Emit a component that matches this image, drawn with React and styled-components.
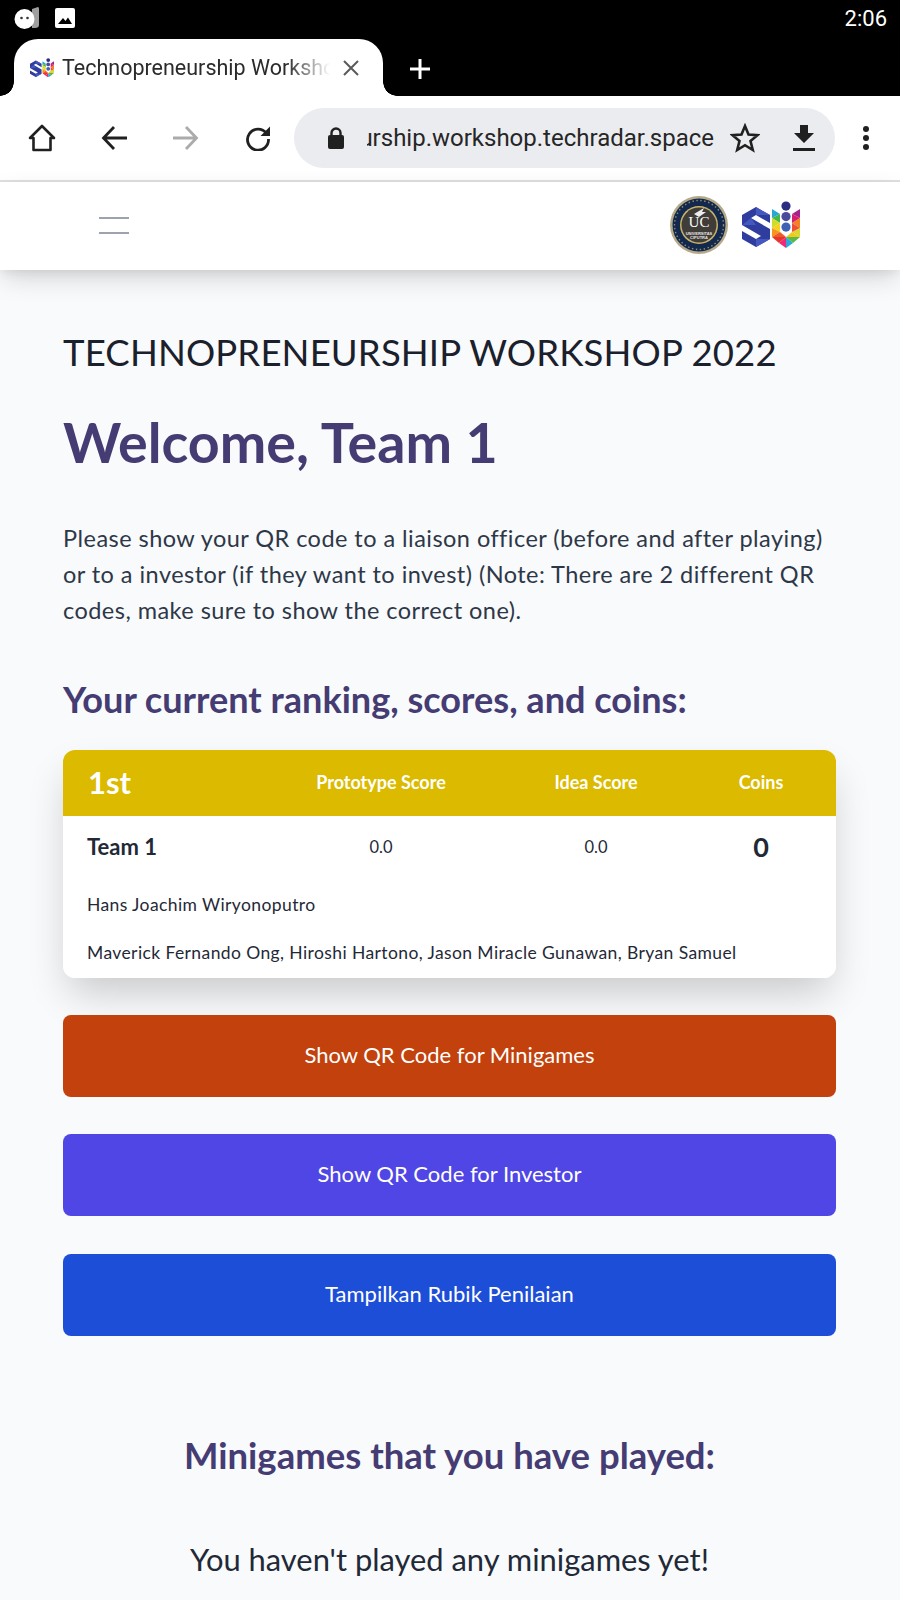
import styled, { createGlobalStyle } from "styled-components";

const GlobalStyle = createGlobalStyle`
  html, body {
    margin: 0;
    padding: 0;
    background: #f9fafb;
  }
  body {
    font-family: "Lato", "Noto Sans", sans-serif;
    height: 1600px;
    overflow: hidden;
  }
  * {
    box-sizing: border-box;
  }
`;

const StatusBar = styled.div`
  height: 39px;
  background: #000;
  display: flex;
  align-items: center;
  justify-content: space-between;
  padding: 0 13px 3px 14px;
`;

const StatusIcons = styled.div`
  display: flex;
  align-items: center;
  gap: 15px;
`;

const Clock = styled.span`
  font-family: "Roboto", sans-serif;
  font-size: 22px;
  color: #fff;
`;

const TabStrip = styled.div`
  height: 57px;
  background: #000;
  display: flex;
  align-items: flex-end;
  padding-left: 14px;
`;

const Tab = styled.div`
  position: relative;
  width: 369px;
  height: 57px;
  background: #fff;
  border-radius: 24px 24px 0 0;
  display: flex;
  align-items: center;
  padding: 0 0 0 16px;
  gap: 8px;

  &::before,
  &::after {
    content: "";
    position: absolute;
    bottom: 0;
    width: 14px;
    height: 14px;
    background: radial-gradient(circle at var(--cx) 0, #000 13.5px, #fff 14px);
  }
  &::before {
    --cx: 0;
    left: -14px;
  }
  &::after {
    --cx: 100%;
    right: -14px;
  }
`;

const TabTitle = styled.span`
  font-family: "Roboto", sans-serif;
  font-size: 21.5px;
  color: #2b2b2b;
  width: 268px;
  white-space: nowrap;
  overflow: hidden;
  -webkit-mask-image: linear-gradient(to right, #000 84%, transparent 100%);
  mask-image: linear-gradient(to right, #000 84%, transparent 100%);
`;

const TabClose = styled.span`
  display: flex;
  margin-left: 5px;
`;

const NewTab = styled.span`
  display: flex;
  margin: 0 0 16px 26px;
`;

const Toolbar = styled.div`
  height: 84px;
  background: #fff;
  display: flex;
  align-items: center;
  padding-left: 6px;
`;

const ToolSlot = styled.div`
  width: 72px;
  display: flex;
  justify-content: center;
`;

const UrlPill = styled.div`
  width: 541px;
  height: 60px;
  margin-top: -1px;
  border-radius: 30px;
  background: #ebecf0;
  display: flex;
  align-items: center;
  padding-left: 33px;
`;

const UrlText = styled.div`
  width: 347px;
  margin-left: 22px;
  overflow: hidden;
  display: flex;
  justify-content: flex-end;
  font-family: "Roboto", sans-serif;
  font-size: 24px;
  color: #262626;
  white-space: nowrap;
`;

const PillAction = styled.div`
  display: flex;
  margin-left: ${(p) => p.$gap}px;
`;

const MenuSlot = styled.div`
  flex: 1;
  display: flex;
  justify-content: center;
  padding-right: 4px;
`;

const Divider = styled.div`
  height: 2px;
  background: #e0e0e0;
`;

const NavBar = styled.nav`
  height: 88px;
  background: #fff;
  box-shadow: 0 10px 25px -3px rgba(0, 0, 0, 0.16),
    0 4px 10px -2px rgba(0, 0, 0, 0.08);
  display: flex;
  align-items: center;
  justify-content: space-between;
  padding: 0 100px 2px 99px;
  position: relative;
`;

const Burger = styled.div`
  width: 30px;
  display: grid;
  gap: 13px;
`;

const BurgerLine = styled.div`
  height: 2px;
  background: #9ca3af;
`;

const Logos = styled.div`
  display: flex;
  align-items: center;
  gap: 14px;
`;

const Main = styled.main`
  padding: 60px 64px 0 63px;
`;

const EventTitle = styled.h2`
  margin: 0;
  font-size: 36.5px;
  line-height: 44px;
  font-weight: 400;
  color: #1a202c;
  letter-spacing: 0.15px;
`;

const Welcome = styled.h1`
  margin: 36px 0 0;
  font-size: 55.6px;
  line-height: 64px;
  font-weight: 700;
  color: #453c74;
`;

const Intro = styled.p`
  margin: 46px 0 0;
  font-size: 23.5px;
  line-height: 36px;
  color: #2d3748;
  letter-spacing: 0.46px;
`;

const SectionTitle = styled.h3`
  margin: ${(p) => p.$top}px 0 0;
  font-size: ${(p) => p.$size}px;
  line-height: 44px;
  font-weight: 700;
  color: #453c74;
  text-align: ${(p) => p.$align || "left"};
`;

const CardShadow = styled.div`
  margin-top: 29px;
  border-radius: 12px;
  box-shadow: 0 20px 40px -6px rgba(0, 0, 0, 0.2);
`;

const Card = styled.section`
  height: 228px;
  background: #fff;
  border-radius: 12px;
  overflow: hidden;
`;

const ScoreRow = styled.div`
  display: grid;
  grid-template-columns: 193px 250px 180px 150px;
  align-items: center;
  height: ${(p) => p.$height}px;
  padding-bottom: 2px;
  background: ${(p) => p.$bg || "transparent"};
  color: ${(p) => p.$color || "#1f2937"};
  text-align: center;
`;

const Rank = styled.div`
  padding-left: 25px;
  font-size: 31px;
  font-weight: 700;
  text-align: left;
`;

const ColumnHead = styled.div`
  font-size: 18px;
  font-weight: 700;
`;

const TeamName = styled.div`
  padding-left: 24px;
  font-size: 22px;
  font-weight: 700;
  text-align: left;
`;

const Score = styled.div`
  font-size: 16.5px;
`;

const Coins = styled.div`
  font-size: 27px;
  font-weight: 700;
`;

const Member = styled.div`
  padding-left: 24px;
  font-size: 17.5px;
  line-height: 20px;
  letter-spacing: 0.4px;
  color: #1f2937;
  margin-top: ${(p) => p.$top}px;
`;

const ActionButton = styled.button`
  display: block;
  width: 100%;
  height: 82px;
  margin-top: ${(p) => p.$top}px;
  padding: 0 0 4px;
  border: 0;
  border-radius: 8px;
  background: ${(p) => p.$bg};
  color: #fff;
  font-family: inherit;
  font-size: 22px;
`;

const EmptyNote = styled.p`
  margin: 63px 0 0;
  font-size: 30.9px;
  line-height: 40px;
  color: #1f2937;
  text-align: center;
`;

const FaceIcon = () => (
  <svg width="26" height="24" viewBox="0 0 26 24">
    <path d="M18 3 L24 1 Q25 1 25 3 V19 Q25 22 21 22 H18 Z" fill="#9e9e9e" />
    <circle cx="10.5" cy="13" r="10" fill="#fff" />
    <circle cx="7.5" cy="12" r="1.3" fill="#333" />
    <circle cx="13.5" cy="12" r="1.3" fill="#333" />
  </svg>
);

const PictureIcon = () => (
  <svg width="20" height="20" viewBox="0 0 20 20">
    <rect width="20" height="20" rx="2" fill="#fff" />
    <path d="M3 16 L8 10 L10.5 13 L13 9.5 L17 16 Z" fill="#000" />
  </svg>
);

// facets of the coloured U, [points, fill]
const uFacets = [
  ["30,8 38,13 30,17", "#27a6d8"],
  ["38,13 38,22 30,17", "#46b649"],
  ["30,17 38,22 30,27", "#cfdc28"],
  ["38,22 38,31 30,27", "#f4d21f"],
  ["30,27 38,31 30,36", "#f7941d"],
  ["38,31 44,36 30,36", "#ed5a24"],
  ["30,36 44,36 37,42", "#e5352c"],
  ["37,42 44,36 44,47", "#ee2a7b"],
  ["44,36 51,42 44,47", "#2aa9dd"],
  ["44,36 58,36 51,42", "#5ab947"],
  ["50,31 58,27 58,36", "#d8d72b"],
  ["50,31 58,36 44,36", "#f2c81e"],
  ["50,22 58,17 58,27", "#f58220"],
  ["50,22 58,27 50,31", "#f04e37"],
  ["50,13 58,8 58,17", "#a6238e"],
  ["50,13 58,17 50,22", "#d6206f"],
];

const SuMark = ({ size }) => (
  <svg width={size} height={size * 0.83} viewBox="0 0 58 48">
    <path d="M0 14 L14 6 L28 14 V22 L14 14 L9 17 L28 28 V38 L14 46 L0 38 V30 L14 38 L19 35 L0 24 Z" fill="#2f3d9e" />
    <path d="M14 6 L28 14 L14 14 Z M0 24 L9 17 L14 24 Z M14 38 L28 38 L14 46 Z" fill="#4558c0" />
    {uFacets.map(([points, fill]) => (
      <polygon key={points} points={points} fill={fill} />
    ))}
    <circle cx="44" cy="5" r="4.6" fill="#2b2d83" />
    <circle cx="44" cy="15.5" r="4.6" fill="#4b4b9b" />
    <circle cx="44" cy="26" r="4.6" fill="#3f62b5" />
  </svg>
);

const Seal = () => (
  <svg width="58" height="58" viewBox="0 0 58 58">
    <circle cx="29" cy="29" r="29" fill="#b5a988" />
    <circle cx="29" cy="29" r="26.5" fill="#12294d" />
    <circle cx="29" cy="29" r="24.5" fill="none" stroke="#8f8a70" strokeWidth="1.4" strokeDasharray="1.5 2.5" />
    <circle cx="29" cy="29" r="19" fill="#c9b36c" />
    <circle cx="29" cy="29" r="17.5" fill="#403c37" />
    <path d="M24 18 L34 12 L32 16 L36 16 L29 21 Z" fill="#eee" />
    <text x="29" y="31" textAnchor="middle" fontFamily="Liberation Serif" fontSize="15" fill="#fff">
      UC
    </text>
    <text x="29" y="38.5" textAnchor="middle" fontFamily="Liberation Sans" fontSize="4" fontWeight="700" fill="#e6e6e6">
      UNIVERSITAS
    </text>
    <text x="29" y="43" textAnchor="middle" fontFamily="Liberation Sans" fontSize="4" fontWeight="700" fill="#e6e6e6">
      CIPUTRA
    </text>
  </svg>
);

const App = () => {
  return (
    <>
      <GlobalStyle />
      <StatusBar>
        <StatusIcons>
          <FaceIcon />
          <PictureIcon />
        </StatusIcons>
        <Clock>2:06</Clock>
      </StatusBar>
      <TabStrip>
        <Tab>
          <SuMark size={24} />
          <TabTitle>Technopreneurship Workshop 2022</TabTitle>
          <TabClose>
            <svg width="16" height="16" viewBox="0 0 16 16" stroke="#5a5a5a" strokeWidth="2">
              <path d="M1 1 L15 15 M15 1 L1 15" />
            </svg>
          </TabClose>
        </Tab>
        <NewTab>
          <svg width="22" height="22" viewBox="0 0 22 22" stroke="#fff" strokeWidth="3">
            <path d="M11 1 V21 M1 11 H21" />
          </svg>
        </NewTab>
      </TabStrip>
      <Toolbar>
        <ToolSlot>
          <svg width="28" height="28" viewBox="0 0 28 28" fill="none" stroke="#202020" strokeWidth="2.6" strokeLinejoin="round">
            <path d="M2 14 L14 2 L26 14 H22.5 V26 H5.5 V14 Z" />
          </svg>
        </ToolSlot>
        <ToolSlot>
          <svg width="26" height="26" viewBox="0 0 26 26" fill="none" stroke="#202020" strokeWidth="2.8">
            <path d="M13 2 L2.5 13 L13 24 M3 13 H26" />
          </svg>
        </ToolSlot>
        <ToolSlot>
          <svg width="26" height="26" viewBox="0 0 26 26" fill="none" stroke="#ababab" strokeWidth="2.8">
            <path d="M13 2 L23.5 13 L13 24 M23 13 H0" />
          </svg>
        </ToolSlot>
        <ToolSlot>
          <svg width="26" height="26" viewBox="0 0 26 26">
            <path d="M21.5 8.5 A10.5 10.5 0 1 0 23.5 14" fill="none" stroke="#202020" strokeWidth="2.8" />
            <path d="M25 1.5 V11 H15.5 Z" fill="#202020" />
          </svg>
        </ToolSlot>
        <UrlPill>
          <svg width="18" height="24" viewBox="0 0 18 24">
            <path d="M4.5 10 V7 A4.5 4.5 0 0 1 13.5 7 V10" fill="none" stroke="#202020" strokeWidth="2.4" />
            <rect x="1" y="9" width="16" height="14" rx="2" fill="#202020" />
          </svg>
          <UrlText>technopreneurship.workshop.techradar.space</UrlText>
          <PillAction $gap={16}>
            <svg width="30" height="30" viewBox="0 0 30 30" fill="none" stroke="#202020" strokeWidth="2.6">
              <path d="M15 3 L18.5 11.5 L27.5 12.2 L20.5 18 L22.8 27 L15 22.2 L7.2 27 L9.5 18 L2.5 12.2 L11.5 11.5 Z" />
            </svg>
          </PillAction>
          <PillAction $gap={33}>
            <svg width="22" height="26" viewBox="0 0 22 26" fill="#202020">
              <path d="M7 0 H15 V8 H21 L11 18 L1 8 H7 Z" />
              <rect y="23" width="22" height="3" />
            </svg>
          </PillAction>
        </UrlPill>
        <MenuSlot>
          <svg width="6" height="24" viewBox="0 0 6 24" fill="#202020">
            <circle cx="3" cy="3" r="3" />
            <circle cx="3" cy="12" r="3" />
            <circle cx="3" cy="21" r="3" />
          </svg>
        </MenuSlot>
      </Toolbar>
      <Divider />
      <NavBar>
        <Burger>
          <BurgerLine />
          <BurgerLine />
        </Burger>
        <Logos>
          <Seal />
          <SuMark size={58} />
        </Logos>
      </NavBar>
      <Main>
        <EventTitle>TECHNOPRENEURSHIP WORKSHOP 2022</EventTitle>
        <Welcome>Welcome, Team 1</Welcome>
        <Intro>
          Please show your QR code to a liaison officer (before and after playing)
          or to a investor (if they want to invest) (Note: There are 2 different QR
          codes, make sure to show the correct one).
        </Intro>
        <SectionTitle $top={49} $size={36.1}>Your current ranking, scores, and coins:</SectionTitle>
        <CardShadow>
          <Card>
            <ScoreRow $height={66} $bg="#dbba00" $color="#fff">
              <Rank>1st</Rank>
              <ColumnHead>Prototype Score</ColumnHead>
              <ColumnHead>Idea Score</ColumnHead>
              <ColumnHead>Coins</ColumnHead>
            </ScoreRow>
            <ScoreRow $height={63}>
              <TeamName>Team 1</TeamName>
              <Score>0.0</Score>
              <Score>0.0</Score>
              <Coins>0</Coins>
            </ScoreRow>
            <Member $top={16}>Hans Joachim Wiryonoputro</Member>
            <Member $top={28}>Maverick Fernando Ong, Hiroshi Hartono, Jason Miracle Gunawan, Bryan Samuel</Member>
          </Card>
        </CardShadow>
        <ActionButton $top={37} $bg="#c2410c">Show QR Code for Minigames</ActionButton>
        <ActionButton $top={37} $bg="#4f46e5">Show QR Code for Investor</ActionButton>
        <ActionButton $top={38} $bg="#1d4ed8">Tampilkan Rubik Penilaian</ActionButton>
        <SectionTitle $align="center" $top={97} $size={36.5}>
          Minigames that you have played:
        </SectionTitle>
        <EmptyNote>You haven't played any minigames yet!</EmptyNote>
      </Main>
    </>
  );
};

export default App;
